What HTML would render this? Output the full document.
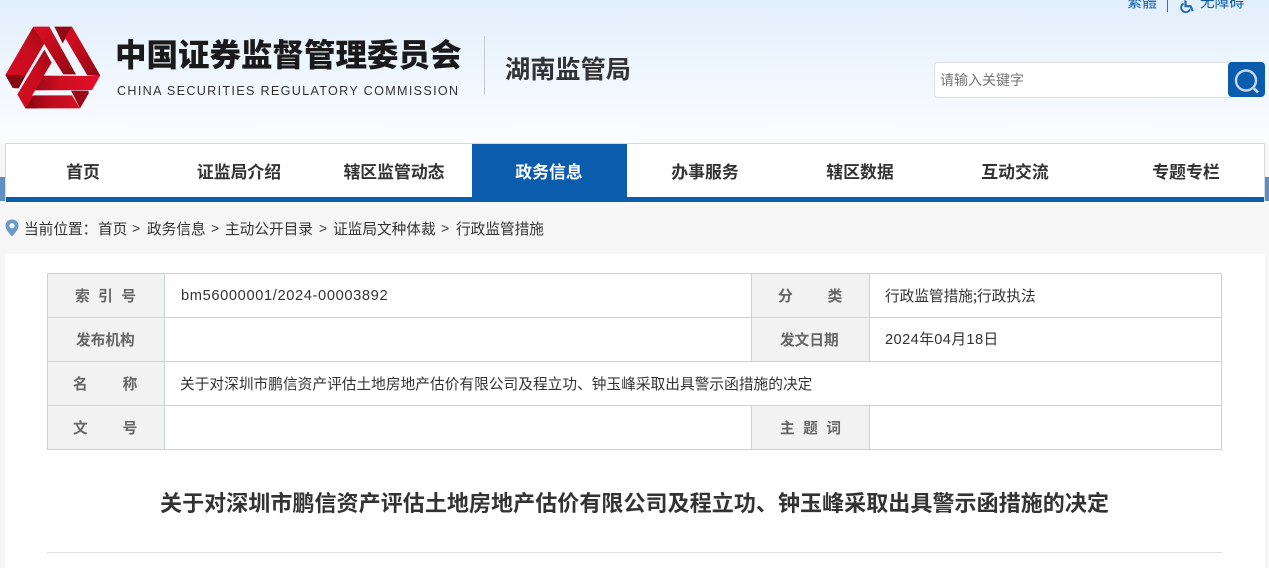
<!DOCTYPE html>
<html lang="zh-CN"><head><meta charset="utf-8"><title>行政监管措施</title>
<style>
*{margin:0;padding:0;box-sizing:border-box}
html,body{width:1269px;height:568px;overflow:hidden;background:#fff}
body{position:relative;font-family:"Liberation Sans","Noto Sans CJK SC",sans-serif;color:#333}
.a{position:absolute;white-space:pre}
.z{font-family:"Noto Sans CJK SC",sans-serif}
#hd{position:absolute;left:0;top:0;width:1269px;height:144px;background:linear-gradient(#e2effc,#fcfdff)}
.nav{position:absolute;top:144px;height:53px;line-height:54px;font-size:16.85px;font-weight:700;text-align:center;color:#333;width:156px}
.l{position:absolute;background:#c8d2dc}
.g{position:absolute;background:#f2f2f2}
.th{position:absolute;font-size:14.67px;font-weight:700;color:#666;line-height:22px;white-space:pre;text-align:center}
.td{position:absolute;font-size:14.67px;color:#333;line-height:22px;white-space:pre}
</style></head><body>
<div id="hd"></div>

<svg class="a" style="left:0;top:15px" width="110" height="105" viewBox="0 0 330 315">
<defs>
<linearGradient id="r1" x1="0" y1="1" x2="1" y2="0"><stop offset="0" stop-color="#d40d22"/><stop offset=".55" stop-color="#c80c1e"/><stop offset="1" stop-color="#a00a18"/></linearGradient>
<linearGradient id="r2" x1="0" y1="0" x2="1" y2="1"><stop offset="0" stop-color="#dc0f26"/><stop offset=".5" stop-color="#bb0b1c"/><stop offset="1" stop-color="#8a0812"/></linearGradient>
<linearGradient id="r3" x1="1" y1="0" x2="0" y2="0"><stop offset="0" stop-color="#e0102a"/><stop offset=".6" stop-color="#d00d22"/><stop offset="1" stop-color="#950a16"/></linearGradient>
<linearGradient id="r4" x1="1" y1="0" x2="0" y2="0"><stop offset="0" stop-color="#d80f26"/><stop offset=".55" stop-color="#bd0c1e"/><stop offset="1" stop-color="#850812"/></linearGradient>
</defs>
<polygon points="16,180 100,35 133,86 78,180" fill="url(#r1)"/>
<polygon points="16,180 78,180 56,220 38,219" fill="#860912"/>
<polygon points="100,35 148,35 228,178 190,178" fill="url(#r2)"/>
<polygon points="163,35 216,35 188,85" fill="#900a16"/>
<polygon points="216,35 300,180 300,183 262,181 195,68" fill="url(#r2)"/>
<polygon points="125,182 300,183 276,225 100,226" fill="url(#r3)"/>
<polygon points="133,104 155,143 97,240 118,280 76,280 52,238" fill="url(#r1)"/>
<polygon points="76,280 240,280 216,241 100,241" fill="url(#r4)"/>
<polygon points="213,227 266,227 266,236 240,280" fill="#9a0a18"/>
</svg>

<div class="a z" style="left:115px;top:30px;font-size:31.5px;line-height:46px;font-weight:900;color:#1a1a1a">中国证券监督管理委员会</div>
<div class="a" style="left:117px;top:83px;font-size:12.6px;line-height:16px;letter-spacing:1.32px;color:#333">CHINA SECURITIES REGULATORY COMMISSION</div>
<div class="a" style="left:484px;top:36px;width:1px;height:59px;background:#c4ccd6"></div>
<div class="a z" style="left:505px;top:48px;font-size:25.2px;line-height:40px;font-weight:700;color:#333">湖南监管局</div>

<div class="a z" style="left:1127px;top:-6px;font-size:15px;line-height:16px;color:#0b5cad">繁體</div>
<div class="a" style="left:1167px;top:0;width:1px;height:12px;background:#2b76bd"></div>
<svg class="a" style="left:1180px;top:0" width="16" height="13" viewBox="0 0 16 13"><circle cx="5" cy="-1" r="1.6" fill="#1d68b3"/><path d="M5.5 1V6.2H10.500L12.800 11" fill="none" stroke="#1d68b3" stroke-width="2.200"/><path d="M3.600 3.500A4.600 4.600 0 1 0 10 9.400" fill="none" stroke="#1d68b3" stroke-width="1.900"/></svg>
<div class="a z" style="left:1200px;top:-6px;font-size:14.67px;line-height:16px;color:#0b5cad">无障碍</div>

<div class="a" style="left:934px;top:62px;width:298px;height:36px;background:#fff;border:1px solid #dcdfe6;border-radius:4px 0 0 4px"></div>
<div class="a z" style="left:940px;top:71px;font-size:14px;line-height:18px;color:#757575">请输入关键字</div>
<div class="a" style="left:1228px;top:62px;width:37px;height:35px;background:#0b5cad;border-radius:4px"></div>
<svg class="a" style="left:1228px;top:62px" width="37" height="35" viewBox="0 0 37 35"><circle cx="18" cy="18.500" r="10" fill="none" stroke="#c6d9ee" stroke-width="2.400"/><path d="M26 26.500L30 30.500" stroke="#c6d9ee" stroke-width="2.800" fill="none"/></svg>

<div class="a" style="left:0;top:144px;width:1269px;height:424px;background:#f6f6f6"></div>
<div class="a" style="left:0;top:177px;width:1269px;height:24px;background:#5f8fc1"></div>
<div class="a" style="left:5px;top:143px;width:1260px;height:58px;background:#fff;border:1px solid #d8d8d8;border-bottom:0"></div>
<div class="a" style="left:6px;top:197px;width:1258px;height:5px;background:#0b5cad"></div>
<div class="a" style="left:472px;top:144px;width:155px;height:58px;background:#0b5cad"></div>
<div class="nav z" style="left:5px">首页</div>
<div class="nav z" style="left:161px">证监局介绍</div>
<div class="nav z" style="left:316px">辖区监管动态</div>
<div class="nav z" style="left:471px;color:#fff">政务信息</div>
<div class="nav z" style="left:627px">办事服务</div>
<div class="nav z" style="left:782px">辖区数据</div>
<div class="nav z" style="left:937px">互动交流</div>
<div class="nav z" style="left:1108px">专题专栏</div>

<svg class="a" style="left:5px;top:219px" width="14" height="18" viewBox="0 0 14 18"><path d="M7 0.500C3.300 0.500 0.500 3.200 0.500 6.700C0.500 10.800 5.200 15.200 7 17.500C8.800 15.200 13.500 10.800 13.500 6.700C13.500 3.200 10.700 0.500 7 0.500Z" fill="#6a9ac8"/><circle cx="7" cy="6.700" r="2.600" fill="#f6f6f6"/></svg>
<div class="a z" style="left:24px;top:218px;font-size:14.67px;line-height:22px;color:#333">当前位置：</div>
<div class="a z" style="left:98px;top:218px;font-size:14.67px;line-height:22px;color:#333">首页</div>
<div class="a" style="left:132px;top:218px;font-size:14px;line-height:21px">&gt;</div>
<div class="a z" style="left:147px;top:218px;font-size:14.67px;line-height:22px;color:#333">政务信息</div>
<div class="a" style="left:211px;top:218px;font-size:14px;line-height:21px">&gt;</div>
<div class="a z" style="left:225px;top:218px;font-size:14.67px;line-height:22px;color:#333">主动公开目录</div>
<div class="a" style="left:319px;top:218px;font-size:14px;line-height:21px">&gt;</div>
<div class="a z" style="left:333px;top:218px;font-size:14.67px;line-height:22px;color:#333">证监局文种体裁</div>
<div class="a" style="left:441px;top:218px;font-size:14px;line-height:21px">&gt;</div>
<div class="a z" style="left:456px;top:218px;font-size:14.67px;line-height:22px;color:#333">行政监管措施</div>

<div class="a" style="left:5px;top:254px;width:1260px;height:314px;background:#fff"></div>

<div class="g" style="left:47px;top:273px;width:118px;height:177px"></div>
<div class="g" style="left:751px;top:273px;width:119px;height:89px"></div>
<div class="g" style="left:751px;top:405px;width:119px;height:45px"></div>
<div class="l" style="left:47px;top:273px;width:1175px;height:1px"></div>
<div class="l" style="left:47px;top:317px;width:1175px;height:1px"></div>
<div class="l" style="left:47px;top:361px;width:1175px;height:1px"></div>
<div class="l" style="left:47px;top:405px;width:1175px;height:1px"></div>
<div class="l" style="left:47px;top:449px;width:1175px;height:1px"></div>
<div class="l" style="left:47px;top:273px;width:1px;height:177px"></div>
<div class="l" style="left:164px;top:273px;width:1px;height:177px"></div>
<div class="l" style="left:1221px;top:273px;width:1px;height:177px"></div>
<div class="l" style="left:751px;top:273px;width:1px;height:45px"></div>
<div class="l" style="left:751px;top:317px;width:1px;height:45px"></div>
<div class="l" style="left:751px;top:405px;width:1px;height:45px"></div>
<div class="l" style="left:869px;top:273px;width:1px;height:89px"></div>
<div class="l" style="left:869px;top:405px;width:1px;height:45px"></div>

<div class="th z" style="left:75px;top:285px;letter-spacing:8.5px">索引号</div>
<div class="th z" style="left:76px;top:329px">发布机构</div>
<div class="th z" style="left:73px;top:373px;letter-spacing:35px">名称</div>
<div class="th z" style="left:73px;top:417px;letter-spacing:35px">文号</div>
<div class="th z" style="left:778px;top:285px;letter-spacing:35px">分类</div>
<div class="th z" style="left:780px;top:329px">发文日期</div>
<div class="th z" style="left:780px;top:417px;letter-spacing:8.5px">主题词</div>

<div class="td" style="left:181px;top:285px;letter-spacing:.62px">bm56000001/2024-00003892</div>
<div class="td z" style="left:885px;top:285px">行政监管措施;行政执法</div>
<div class="td" style="left:885px;top:329px;letter-spacing:.4px">2024年04月18日</div>
<div class="td z" style="left:180px;top:373px;letter-spacing:.05px">关于对深圳市鹏信资产评估土地房地产估价有限公司及程立功、钟玉峰采取出具警示函措施的决定</div>

<div class="a z" style="left:160px;top:485px;font-size:22px;line-height:34px;font-weight:700;color:#333;letter-spacing:.07px">关于对深圳市鹏信资产评估土地房地产估价有限公司及程立功、钟玉峰采取出具警示函措施的决定</div>
<div class="a" style="left:47px;top:552px;width:1175px;height:1px;background:#e0e0e0"></div>
</body></html>
